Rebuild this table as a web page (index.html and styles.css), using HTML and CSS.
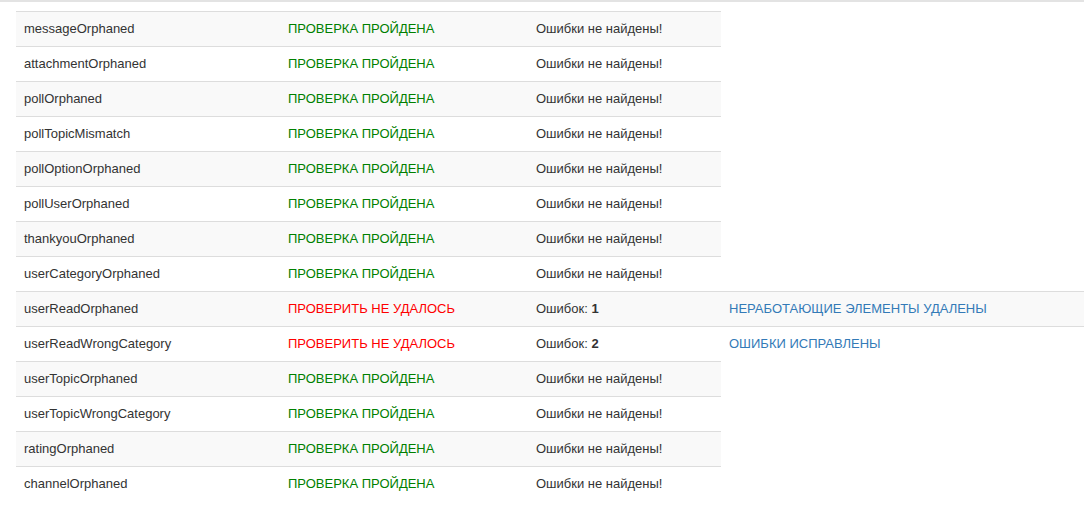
FILE: index.html
```html
<!DOCTYPE html>
<html lang="ru">
<head>
  <meta charset="UTF-8" />
  <title>Проверка базы данных</title>
  <link rel="stylesheet" href="styles.css">
</head>
<body>
  <div class="topline"></div>
  <div class="wrap">
    <table class="table table-striped">
      <colgroup>
        <col class="c-name">
        <col class="c-status">
        <col class="c-result">
        <col class="c-action">
      </colgroup>
      <tbody>
        <tr><td>messageOrphaned</td><td class="ok">ПРОВЕРКА ПРОЙДЕНА</td><td>Ошибки не найдены!</td></tr>
        <tr><td>attachmentOrphaned</td><td class="ok">ПРОВЕРКА ПРОЙДЕНА</td><td>Ошибки не найдены!</td></tr>
        <tr><td>pollOrphaned</td><td class="ok">ПРОВЕРКА ПРОЙДЕНА</td><td>Ошибки не найдены!</td></tr>
        <tr><td>pollTopicMismatch</td><td class="ok">ПРОВЕРКА ПРОЙДЕНА</td><td>Ошибки не найдены!</td></tr>
        <tr><td>pollOptionOrphaned</td><td class="ok">ПРОВЕРКА ПРОЙДЕНА</td><td>Ошибки не найдены!</td></tr>
        <tr><td>pollUserOrphaned</td><td class="ok">ПРОВЕРКА ПРОЙДЕНА</td><td>Ошибки не найдены!</td></tr>
        <tr><td>thankyouOrphaned</td><td class="ok">ПРОВЕРКА ПРОЙДЕНА</td><td>Ошибки не найдены!</td></tr>
        <tr><td>userCategoryOrphaned</td><td class="ok">ПРОВЕРКА ПРОЙДЕНА</td><td>Ошибки не найдены!</td></tr>
        <tr><td>userReadOrphaned</td><td class="fail">ПРОВЕРИТЬ НЕ УДАЛОСЬ</td><td>Ошибок: <b>1</b></td><td class="fix">НЕРАБОТАЮЩИЕ ЭЛЕМЕНТЫ УДАЛЕНЫ</td></tr>
        <tr><td>userReadWrongCategory</td><td class="fail">ПРОВЕРИТЬ НЕ УДАЛОСЬ</td><td>Ошибок: <b>2</b></td><td class="fix">ОШИБКИ ИСПРАВЛЕНЫ</td></tr>
        <tr><td>userTopicOrphaned</td><td class="ok">ПРОВЕРКА ПРОЙДЕНА</td><td>Ошибки не найдены!</td></tr>
        <tr><td>userTopicWrongCategory</td><td class="ok">ПРОВЕРКА ПРОЙДЕНА</td><td>Ошибки не найдены!</td></tr>
        <tr><td>ratingOrphaned</td><td class="ok">ПРОВЕРКА ПРОЙДЕНА</td><td>Ошибки не найдены!</td></tr>
        <tr><td>channelOrphaned</td><td class="ok">ПРОВЕРКА ПРОЙДЕНА</td><td>Ошибки не найдены!</td></tr>
      </tbody>
    </table>
  </div>
</body>
</html>
```

FILE: styles.css
```css
body {
  font-family: 'Liberation Sans', Arial, sans-serif;
  font-size: 13px;
  color: #333;
  background: #fff;
  margin: 0;
  padding: 0;
}
.topline {
  height: 2px;
  background: #e3e3e3;
  margin-bottom: 9px;
}
.wrap {
  padding-left: 16px;
}
.table {
  width: 1068px;
  table-layout: fixed;
  border-collapse: collapse;
  border-spacing: 0;
}
.c-name { width: 264px; }
.c-status { width: 248px; }
.c-result { width: 193px; }
.c-action { width: 363px; }
.table td {
  padding: 8px;
  line-height: 18px;
  border-top: 1px solid #ddd;
  text-align: left;
  vertical-align: top;
  white-space: nowrap;
}
.table-striped tr:nth-child(odd) td {
  background-color: #f9f9f9;
}
.ok { color: #008000; }
.fail { color: #ff0000; }
.fix { color: #337ab7; }
b { font-weight: bold; }
```
